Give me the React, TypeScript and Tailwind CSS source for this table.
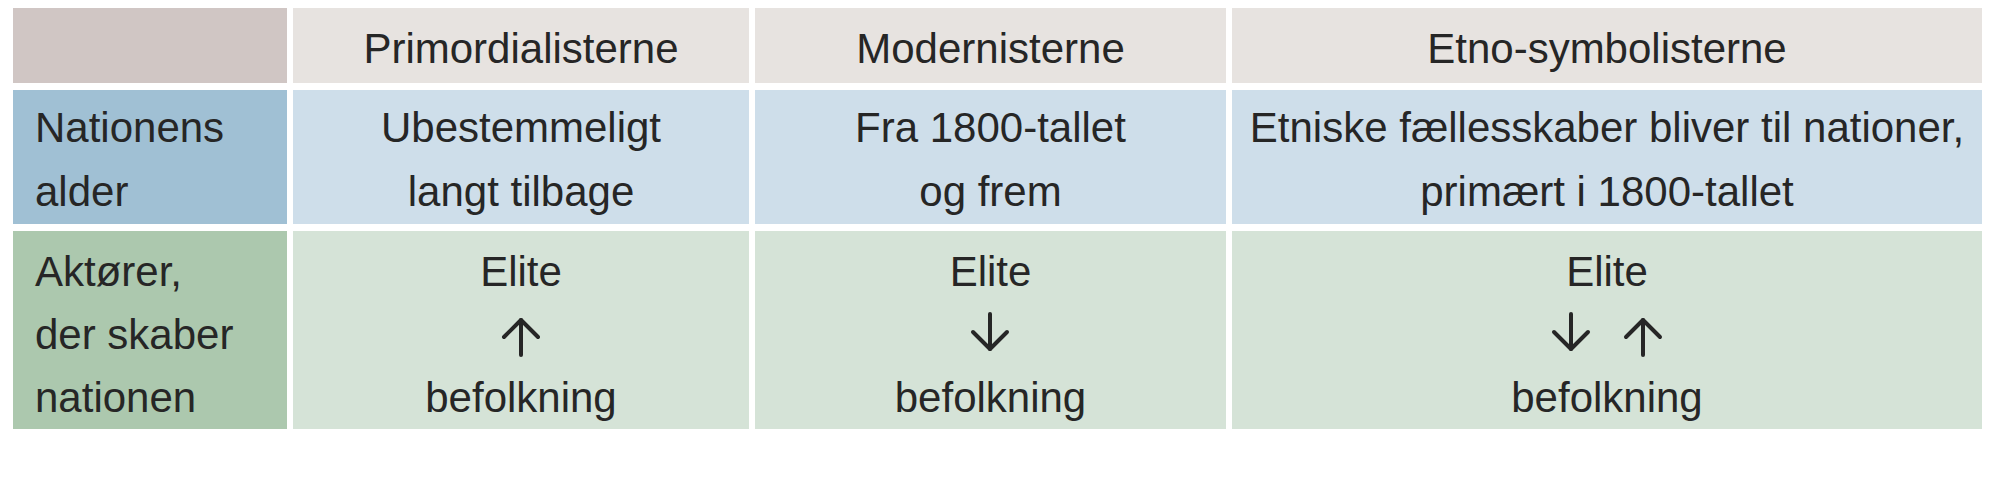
import React from 'react';

// Pil tegnet som SVG, så størrelse og streg passer til tabellen
const Arrow = ({ dir }: { dir: 'up' | 'down' }) => (
  <svg
    viewBox="0 0 40 40"
    className={`w-[40px] h-[40px] ${dir === 'down' ? '-translate-y-[3px]' : 'translate-y-[2px]'}`}
    fill="none"
    stroke="#262626"
    strokeWidth={4}
    strokeLinecap="round"
    strokeLinejoin="round"
    aria-hidden="true"
  >
    {dir === 'up' ? (
      <>
        <path d="M20 3 L20 38" />
        <path d="M3 20 L20 3 L37 20" />
      </>
    ) : (
      <>
        <path d="M20 2 L20 37" />
        <path d="M3 20 L20 37 L37 20" />
      </>
    )}
  </svg>
);

const Flow = ({ arrows }: { arrows: ('up' | 'down')[] }) => (
  <div className="flex flex-col items-center">
    <span className="h-[63px] leading-[63px]">Elite</span>
    <div className="h-[63px] flex items-center justify-center gap-[32px]">
      {arrows.map((a, i) => (
        <Arrow key={i} dir={a} />
      ))}
    </div>
    <span className="h-[63px] leading-[63px]">befolkning</span>
  </div>
);

export default function App() {
  const head = 'bg-[#e7e3e0] flex items-center justify-center pt-[6px]';
  const blue = 'bg-[#cedeea] flex flex-col items-center justify-center text-center pt-[6px]';
  const green = 'bg-[#d5e3d7] flex items-center justify-center pt-[9px]';

  return (
    <div
      className="w-[2000px] h-[484px] bg-white pl-[13px] pt-[8px] text-[#262626] text-[42px] leading-[64px] whitespace-nowrap"
      style={{ fontFamily: '"Liberation Sans", Arial, sans-serif' }}
    >
      <div className="grid grid-cols-[274px_456px_471px_750px] grid-rows-[75px_134px_198px] gap-x-[6px] gap-y-[7px]">
        {/* Overskrift */}
        <div className="bg-[#d0c6c4]" />
        <div className={head}>Primordialisterne</div>
        <div className={head}>Modernisterne</div>
        <div className={head}>Etno-symbolisterne</div>

        {/* Nationens alder */}
        <div className="bg-[#a0c0d4] flex flex-col justify-center pl-[22px] pt-[6px]">
          <span>Nationens</span>
          <span>alder</span>
        </div>
        <div className={blue}>
          <span>Ubestemmeligt</span>
          <span>langt tilbage</span>
        </div>
        <div className={blue}>
          <span>Fra 1800-tallet</span>
          <span>og frem</span>
        </div>
        <div className={blue}>
          <span>Etniske fællesskaber bliver til nationer,</span>
          <span>primært i 1800-tallet</span>
        </div>

        {/* Aktører */}
        <div className="bg-[#acc8ae] flex flex-col justify-center pl-[22px] pt-[9px] leading-[63px]">
          <span>Aktører,</span>
          <span>der skaber</span>
          <span>nationen</span>
        </div>
        <div className={green}>
          <Flow arrows={['up']} />
        </div>
        <div className={green}>
          <Flow arrows={['down']} />
        </div>
        <div className={green}>
          <Flow arrows={['down', 'up']} />
        </div>
      </div>
    </div>
  );
}
